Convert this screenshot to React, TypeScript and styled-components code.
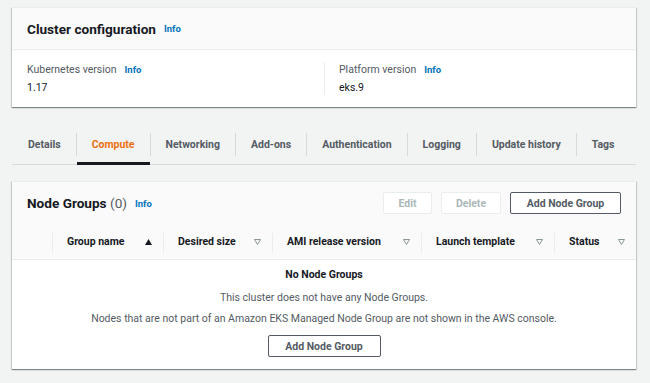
import React from "react";
import styled, { createGlobalStyle } from "styled-components";

const GlobalStyle = createGlobalStyle`
  html, body { margin: 0; padding: 0; }
  body {
    background: #f2f3f3;
    font-family: Roboto, "Noto Sans", Arial, sans-serif;
    color: #16191f;
    -webkit-font-smoothing: antialiased;
  }
`;

const Page = styled.div`
  padding: 7px 14px 13px 12px;
  display: flex;
  flex-direction: column;
  width: 650px;
  box-sizing: border-box;
`;

const Card = styled.section<{ $mt?: number }>`
  background: #fff;
  margin-top: ${(p) => p.$mt ?? 0}px;
  box-shadow: 0 1px 1px 0 rgba(0, 28, 36, 0.3), 1px 1px 1px 0 rgba(0, 28, 36, 0.15),
    -1px 1px 1px 0 rgba(0, 28, 36, 0.15);
  border-top: 1px solid #eaeded;
`;

const CardHeader = styled.header<{ $h: number; $flat?: boolean }>`
  height: ${(p) => p.$h}px;
  background: #fafafa;
  border-bottom: ${(p) => (p.$flat ? "none" : "1px solid #eaeded")};
  display: flex;
  align-items: center;
  padding: 0 15px;
  gap: 7px;
`;

const Title = styled.h2`
  margin: 0;
  font-size: 13.6px;
  font-weight: 700;
  color: #16191f;
`;

const Count = styled.span`
  font-weight: 400;
  color: #545b64;
`;

const Info = styled.a`
  font-size: 9.5px;
  font-weight: 700;
  color: #0073bb;
  text-decoration: none;
  margin-left: 1px;
`;

const ConfigBody = styled.div`
  display: grid;
  grid-template-columns: 1fr 1fr;
  padding: 12px 0 12px;
`;

const ConfigCol = styled.div<{ $divider?: boolean }>`
  padding: 0 15px 0 ${(p) => (p.$divider ? 14 : 15)}px;
  border-left: ${(p) => (p.$divider ? "1px solid #eaeded" : "none")};
  display: flex;
  flex-direction: column;
  gap: 3px;
`;

const LabelRow = styled.div`
  display: flex;
  align-items: center;
  gap: 7px;
  font-size: 10.5px;
  color: #545b64;
  height: 15px;
`;

const Value = styled.div`
  font-size: 10.5px;
  color: #16191f;
  height: 15px;
  display: flex;
  align-items: center;
`;

const Tabs = styled.nav`
  margin-top: 18px;
  height: 39px;
  display: flex;
  align-items: stretch;
  border-bottom: 1px solid #d5dbdb;
`;

const Tab = styled.div<{ $active?: boolean; $first?: boolean }>`
  position: relative;
  display: flex;
  align-items: center;
  white-space: nowrap;
  padding: 0 15px 0 ${(p) => (p.$first ? 16 : 15)}px;
  font-size: 10.5px;
  font-weight: 700;
  color: ${(p) => (p.$active ? "#ec7211" : "#545b64")};
  &::after {
    content: ${(p) => (p.$active ? '""' : "none")};
    position: absolute;
    left: 0;
    right: 0;
    bottom: -1px;
    height: 3px;
    background: #16191f;
  }
`;

const TabSep = styled.div`
  width: 1px;
  background: #d5dbdb;
  margin: 8px 0 8px;
`;

const Actions = styled.div`
  margin-left: auto;
  display: flex;
  gap: 9px;
`;

const Button = styled.button<{ $disabled?: boolean; $w: number }>`
  width: ${(p) => p.$w}px;
  height: 22px;
  background: #fff;
  border: 1px solid ${(p) => (p.$disabled ? "#eaeded" : "#545b64")};
  border-radius: 2px;
  color: ${(p) => (p.$disabled ? "#aab7b8" : "#545b64")};
  font-family: inherit;
  font-size: 10.5px;
  font-weight: 700;
  padding: 0;
  display: flex;
  align-items: center;
  justify-content: center;
`;

const TableHead = styled.div`
  display: grid;
  grid-template-columns: 40px 111px 109px 149px 133px 1fr;
  height: 35px;
  background: #fafafa;
  border-bottom: 1px solid #eaeded;
  align-items: center;
`;

const HeadCell = styled.div<{ $sep?: boolean }>`
  height: 100%;
  display: flex;
  align-items: center;
  justify-content: space-between;
  padding: 0 10px 0 15px;
  font-size: 10.5px;
  font-weight: 700;
  color: #16191f;
  position: relative;
  box-sizing: border-box;
  &::before {
    content: ${(p) => (p.$sep ? '""' : "none")};
    position: absolute;
    left: 0;
    top: 9px;
    bottom: 6px;
    width: 1px;
    background: #eaeded;
  }
`;

const Empty = styled.div`
  display: flex;
  flex-direction: column;
  align-items: center;
  padding: 7px 0 12px;
  font-size: 10.5px;
  color: #545b64;
`;

const EmptyTitle = styled.div`
  font-weight: 700;
  color: #16191f;
  height: 15px;
  line-height: 15px;
`;

const EmptyText = styled.div<{ $mt: number }>`
  height: 15px;
  line-height: 15px;
  margin-top: ${(p) => p.$mt}px;
`;

const EmptyAction = styled.div`
  margin-top: 9px;
`;

const SortUp = () => (
  <svg width="9" height="8" viewBox="0 0 9 8">
    <path d="M4.5 1 L8 7 L1 7 Z" fill="#16191f" />
  </svg>
);

const SortDown = () => (
  <svg width="9" height="8" viewBox="0 0 9 8">
    <path d="M1.5 1.5 L7.5 1.5 L4.5 6.5 Z" fill="none" stroke="#879596" strokeWidth="1" strokeLinejoin="round" />
  </svg>
);

const tabs = [
  "Details",
  "Compute",
  "Networking",
  "Add-ons",
  "Authentication",
  "Logging",
  "Update history",
  "Tags",
];

const columns: { label: string; up?: boolean }[] = [
  { label: "Group name", up: true },
  { label: "Desired size" },
  { label: "AMI release version" },
  { label: "Launch template" },
  { label: "Status" },
];

export default function App() {
  return (
    <>
      <GlobalStyle />
      <Page>
        <Card>
          <CardHeader $h={41}>
            <Title>Cluster configuration</Title>
            <Info>Info</Info>
          </CardHeader>
          <ConfigBody>
            <ConfigCol>
              <LabelRow>
                Kubernetes version <Info>Info</Info>
              </LabelRow>
              <Value>1.17</Value>
            </ConfigCol>
            <ConfigCol $divider>
              <LabelRow>
                Platform version <Info>Info</Info>
              </LabelRow>
              <Value>eks.9</Value>
            </ConfigCol>
          </ConfigBody>
        </Card>

        <Tabs>
          {tabs.map((t, i) => (
            <React.Fragment key={t}>
              {i > 0 && <TabSep />}
              <Tab $active={t === "Compute"} $first={i === 0}>
                {t}
              </Tab>
            </React.Fragment>
          ))}
        </Tabs>

        <Card $mt={16}>
          <CardHeader $h={42} $flat>
            <Title>
              Node Groups <Count>(0)</Count>
            </Title>
            <Info>Info</Info>
            <Actions>
              <Button $disabled $w={49}>Edit</Button>
              <Button $disabled $w={60}>Delete</Button>
              <Button $w={111}>Add Node Group</Button>
            </Actions>
          </CardHeader>
          <TableHead>
            <HeadCell />
            {columns.map((c) => (
              <HeadCell key={c.label} $sep>
                <span>{c.label}</span>
                {c.up ? <SortUp /> : <SortDown />}
              </HeadCell>
            ))}
          </TableHead>
          <Empty>
            <EmptyTitle>No Node Groups</EmptyTitle>
            <EmptyText $mt={8}>This cluster does not have any Node Groups.</EmptyText>
            <EmptyText $mt={6}>
              Nodes that are not part of an Amazon EKS Managed Node Group are not shown in the AWS console.
            </EmptyText>
            <EmptyAction>
              <Button $w={113}>Add Node Group</Button>
            </EmptyAction>
          </Empty>
        </Card>
      </Page>
    </>
  );
}
